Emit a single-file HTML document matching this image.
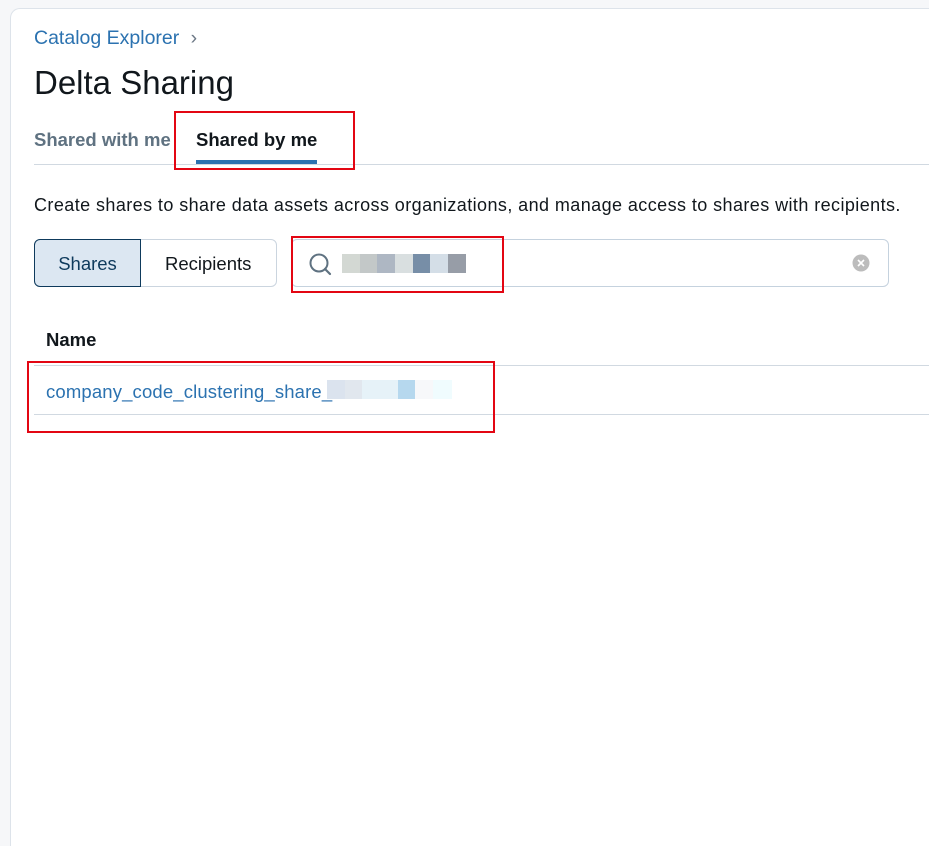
<!DOCTYPE html>
<html><head><style>
*{margin:0;padding:0;box-sizing:border-box}
html,body{width:929px;height:846px;overflow:hidden}
body{background:#f6f7f9;font-family:"Liberation Sans",sans-serif;position:relative}
.card{position:absolute;left:10px;top:8px;width:940px;height:850px;background:#fff;border:1px solid #dde3ea;border-bottom:none;border-radius:10px 10px 0 0}
.a{position:absolute;white-space:nowrap}
.rb{position:absolute;border:2px solid #e30613}
.px{position:absolute;height:19px}
</style></head><body>
<div class="card"></div>
<div class="a" style="left:34px;top:27px;font-size:19.5px;color:#2b72b0">Catalog Explorer <span style="color:#6b7785;margin-left:6px">›</span></div>
<div class="a" style="left:34px;top:64px;font-size:33px;color:#11171c;font-weight:500">Delta Sharing</div>
<div class="a" style="left:34px;top:129px;font-size:18.5px;font-weight:bold;color:#5f7281">Shared with me</div>
<div class="a" style="left:196px;top:129px;font-size:18.5px;font-weight:bold;color:#11171c">Shared by me</div>
<div class="a" style="left:196px;top:160px;width:121px;height:4px;background:#2c72b0"></div>
<div class="a" style="left:34px;top:164px;width:895px;height:1px;background:#d1d9e1"></div>
<div class="rb" style="left:174px;top:111px;width:181px;height:59px"></div>
<div class="a" style="left:34px;top:195px;font-size:18px;color:#11171c;letter-spacing:0.42px">Create shares to share data assets across organizations, and manage access to shares with recipients.</div>
<div class="a" style="left:34px;top:239px;width:243px;height:48px;border:1px solid #cbd5df;border-radius:6px"></div>
<div class="a" style="left:34px;top:239px;width:107px;height:48px;background:#dce7f2;border:1.5px solid #0e3a5c;border-radius:6px 0 0 6px;font-size:18.5px;color:#0e3a5c;text-align:center;line-height:47px">Shares</div>
<div class="a" style="left:165px;top:239px;font-size:18.5px;color:#11171c;line-height:50px">Recipients</div>
<div class="a" style="left:291px;top:239px;width:598px;height:48px;border:1px solid #c5d2de;border-radius:6px"></div>
<svg class="a" style="left:307px;top:251px" width="26" height="26" viewBox="0 0 26 26"><circle cx="12" cy="12" r="8.5" fill="none" stroke="#5f7281" stroke-width="2"/><line x1="18" y1="18" x2="23" y2="23" stroke="#5f7281" stroke-width="2.2" stroke-linecap="round"/></svg>
<div class="px" style="left:342px;top:254px;width:18px;background:#d3d8d3"></div>
<div class="px" style="left:360px;top:254px;width:17px;background:#c3c8c8"></div>
<div class="px" style="left:377px;top:254px;width:18px;background:#aeb7c3"></div>
<div class="px" style="left:395px;top:254px;width:18px;background:#d9dfe0"></div>
<div class="px" style="left:413px;top:254px;width:17px;background:#778ea7"></div>
<div class="px" style="left:430px;top:254px;width:18px;background:#d4dee7"></div>
<div class="px" style="left:448px;top:254px;width:18px;background:#979da7"></div>
<svg class="a" style="left:852px;top:254px" width="18" height="18" viewBox="0 0 18 18"><circle cx="9" cy="9" r="8.5" fill="#bcbcbc"/><path d="M6 6l6 6M12 6l-6 6" stroke="#fff" stroke-width="1.6"/></svg>
<div class="rb" style="left:291px;top:236px;width:213px;height:57px"></div>
<div class="a" style="left:46px;top:329px;font-size:18.5px;font-weight:bold;color:#11171c">Name</div>
<div class="a" style="left:34px;top:365px;width:895px;height:1px;background:#d1d9e1"></div>
<div class="a" style="left:46px;top:381px;font-size:18.5px;color:#2b72b0;letter-spacing:0.15px">company_code_clustering_share_</div>
<div class="px" style="left:327px;top:380px;width:18px;background:#dbe3ee"></div>
<div class="px" style="left:345px;top:380px;width:17px;background:#e1e7ee"></div>
<div class="px" style="left:362px;top:380px;width:36px;background:#e6f2f8"></div>
<div class="px" style="left:398px;top:380px;width:17px;background:#b6d8ee"></div>
<div class="px" style="left:415px;top:380px;width:18px;background:#f7f8fa"></div>
<div class="px" style="left:433px;top:380px;width:19px;background:#f0fcfe"></div>
<div class="a" style="left:34px;top:414px;width:895px;height:1px;background:#d1d9e1"></div>
<div class="rb" style="left:27px;top:361px;width:468px;height:72px"></div>
</body></html>
